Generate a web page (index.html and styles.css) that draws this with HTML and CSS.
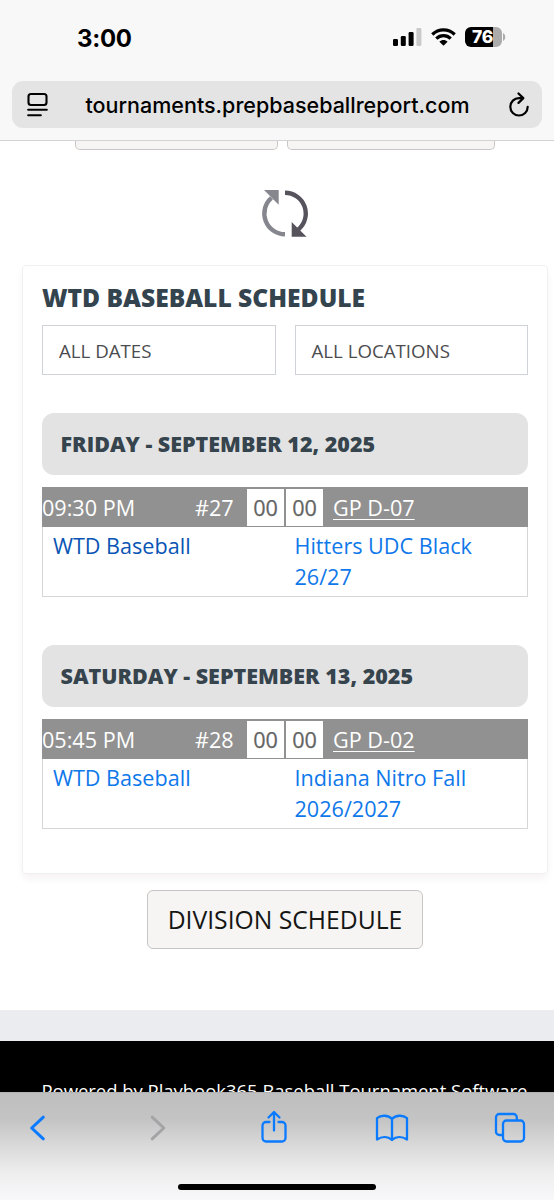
FILE: index.html
```html
<!DOCTYPE html>
<html lang="en">
<head>
<meta charset="utf-8">
<meta name="viewport" content="width=device-width, initial-scale=1">
<title>WTD Baseball Schedule</title>
<link rel="stylesheet" href="styles.css">
</head>
<body>
<div class="screen">
  <header class="browser-top">
    <div class="status">
      <span class="clock">3:00</span>
      <div class="status-icons">
        <svg class="signal" width="29" height="18" viewBox="0 0 29 18"><rect x="0" y="11" width="5" height="7" rx="1.3"/><rect x="7.800" y="8" width="5" height="10" rx="1.3"/><rect x="15.600" y="4" width="5" height="14" rx="1.300"/><rect class="dim" x="23.400" y="0" width="5" height="18" rx="1.300"/></svg>
        <svg class="wifi" width="25" height="18" viewBox="0 0 25 18"><g fill="none" stroke="#000" stroke-width="3.200"><path d="M1.300 6.500C7.500 .3 17.500 .3 23.700 6.500"/><path d="M5.300 10.700c4-4 10.400-4 14.400 0"/></g><path d="M8.400 13.700c2.400-2.200 5.800-2.200 8.200 0L12.500 17.800Z"/></svg>
        <div class="battery"><span class="battery-level">76</span></div>
        <svg class="battery-tip" width="3" height="8" viewBox="0 0 3 8"><path d="M0 0c3 1.500 3 6.500 0 8Z"/></svg>
      </div>
    </div>
    <div class="address">
      <svg class="reader" width="22" height="26" viewBox="0 0 22 26"><g fill="none" stroke="#000" stroke-width="2.100" stroke-linecap="round"><rect x="1.500" y="2" width="18" height="11" rx="2.500"/><path d="M1.200 17.800h18.600M1.200 23.300h12.600"/></g></svg>
      <span class="url">tournaments.prepbaseballreport.com</span>
      <svg class="reload" width="22" height="26" viewBox="0 0 22 26"><g fill="none" stroke="#000" stroke-width="2.200" stroke-linecap="round" stroke-linejoin="round"><path d="M14.500 6.100H11A8.700 8.700 0 1 0 19.700 14.800"/><path d="M10.500 1.500l4.800 4.600-4.800 4.800"/></g></svg>
    </div>
  </header>

  <main class="page">
    <div class="peek-row"><div class="peek peek-left"></div><div class="peek peek-right"></div></div>
    <svg class="refresh" width="48" height="48" viewBox="0 0 48 48"><g fill="none" stroke-width="4.400"><path stroke="#85868e" d="M24 44.300A20.800 20.800 0 0 1 10.500 7.800"/><path stroke="#56535d" d="M24 2.700A20.800 20.800 0 0 1 37.500 39.300"/></g><path fill="#85868e" d="M3 0H17.700V14.800Z"/><path fill="#56535d" d="M30.700 32V46.800H45.500Z"/></svg>

    <section class="card">
      <h1 class="title">WTD BASEBALL SCHEDULE</h1>
      <div class="filters"><div class="filter">ALL DATES</div><div class="filter">ALL LOCATIONS</div></div>

      <h2 class="day friday">FRIDAY - SEPTEMBER 12, 2025</h2>
      <div class="game">
        <div class="game-head"><span class="time">09:30 PM</span><span class="number">#27</span><span class="score">00</span><span class="score">00</span><a class="field">GP D-07</a></div>
        <div class="teams"><a class="team active">WTD Baseball</a><a class="team">Hitters UDC Black<br>26/27</a></div>
      </div>

      <h2 class="day saturday">SATURDAY - SEPTEMBER 13, 2025</h2>
      <div class="game">
        <div class="game-head"><span class="time">05:45 PM</span><span class="number">#28</span><span class="score">00</span><span class="score">00</span><a class="field">GP D-02</a></div>
        <div class="teams"><a class="team">WTD Baseball</a><a class="team">Indiana Nitro Fall<br>2026/2027</a></div>
      </div>
    </section>

    <div class="division">DIVISION SCHEDULE</div>
  </main>

  <div class="band"></div>
  <footer class="powered">Powered by Playbook365 Baseball Tournament Software</footer>

  <nav class="toolbar">
    <div class="tools">
      <svg class="low" width="36" height="28" viewBox="0.500 0 18 28"><path class="line thick" d="M14.800 3.200 3.200 14 14.800 24.800"/></svg>
      <svg class="low" width="36" height="28" viewBox="-2 0 18 28"><path class="line thick off" d="M3.200 3.200 14.800 14 3.200 24.800"/></svg>
      <svg width="36" height="34" viewBox="0 0 28 34"><path class="line" d="M9.500 12H6a3.500 3.500 0 0 0-3.500 3.500V28A3.500 3.500 0 0 0 6 31.500h16a3.500 3.500 0 0 0 3.500-3.500V15.500A3.500 3.500 0 0 0 22 12h-3.500M14 20.500V2.500M8.500 7.500 14 2l5.500 5.500"/></svg>
      <svg class="low" width="36" height="28" viewBox="0 0 34 28"><path class="line" d="M17 5C13 .8 6 .8 2 4.200V25.500C7 22.300 13 22.300 17 26c4-3.700 10-3.700 15-.5V4.200C28 .8 21 .8 17 5V26"/></svg>
      <svg class="tabs" width="36" height="32" viewBox="0 0 32 32"><path class="line" d="M8.500 23H5.300A3.300 3.300 0 0 1 2 19.700V5.300A3.300 3.300 0 0 1 5.300 2H19.500a3.300 3.300 0 0 1 3.300 3.300V8"/><rect class="line" x="9" y="8.500" width="21" height="21" rx="3.500"/></svg>
    </div>
    <div class="home-bar"></div>
  </nav>
</div>
</body>
</html>
```

FILE: styles.css
```css
* { box-sizing: border-box; }
body { margin: 0; background: #fff; font-family: "Open Sans", "Noto Sans", sans-serif; }
.screen { width: 554px; height: 1200px; overflow: hidden; display: flex; flex-direction: column; background: #fff; white-space: nowrap; }

.browser-top { height: 141px; flex: none; background: #f9f8f9; border-bottom: 1px solid #d4d3d4; font-family: Inter, sans-serif; color: #000; }
.status { height: 81px; padding: 0 48px 0 77px; display: flex; justify-content: space-between; }
.clock { padding-top: 23px; font-size: 24px; line-height: 32px; font-weight: 700; letter-spacing: -.3px; }
.status-icons { height: 20px; margin-top: 27px; display: flex; align-items: center; }
.signal .dim { fill: #c9c9ca; }
.wifi { margin-left: 9px; }
.battery { margin-left: 9px; width: 37px; height: 20px; border-radius: 6px; overflow: hidden; background: linear-gradient(to right, #000 28px, #ababac 28px); }
.battery-level { display: block; padding-left: 7px; color: #fff; font-size: 17.500px; line-height: 20px; font-weight: 800; letter-spacing: -.2px; }
.battery-tip { margin-left: 1px; fill: #ababac; }
.address { height: 47px; margin: 0 12px; padding: 0 12px 0 15px; border-radius: 11px; background: #e5e4e4; display: flex; align-items: center; justify-content: space-between; }
.url { margin-right: 2px; font-size: 21.500px; line-height: 30px; font-weight: 500; }

.page { height: 869px; flex: none; display: flex; flex-direction: column; }
.peek-row { height: 9px; flex: none; padding-left: 75px; display: flex; gap: 9px; }
.peek { width: 203px; border: 1px solid #cac6c6; border-top: 0; border-radius: 0 0 5px 5px; background: #f6f5f3; }
.peek-right { width: 208px; }
.refresh { flex: none; margin: 40px 0 27px 261px; }
.card { width: 526px; height: 609px; flex: none; margin-left: 22px; padding: 17px 19px 0; border: 1px solid #f0f0f1; border-radius: 4px; box-shadow: 0 5px 9px -1px rgba(60, 20, 20, .06); }
.title { margin: 0; font-size: 24.600px; line-height: 30px; font-weight: 800; color: #34444f; }
.filters { margin-top: 12px; display: flex; gap: 19px; }
.filter { flex: 1; height: 50px; padding-left: 16px; border: 1px solid #cfd3d8; font-size: 18.700px; line-height: 50px; font-weight: 500; color: #4c4c50; }
.day { height: 62px; margin: 0 0 12px; padding-left: 18.500px; border-radius: 12px; background: #e3e3e3; font-size: 21.500px; line-height: 61px; font-weight: 800; color: #36444d; }
.friday { margin-top: 38px; }
.saturday { margin-top: 48px; }
.game { height: 110px; border: 1px solid #d6d6d6; border-top: 0; }
.game-head { height: 40px; margin: 0 -1px; padding-top: 1px; background: #919191; color: #fff; display: flex; align-items: center; font-size: 21.600px; line-height: 39px; }
.time { width: 153px; }
.number { width: 52px; }
.score { width: 37px; height: 37px; margin-right: 2px; background: #fff; color: #646464; font-weight: 500; line-height: 37px; text-align: center; -webkit-text-stroke: .25px #646464; }
.field { margin-left: 8px; text-decoration: underline; text-decoration-thickness: 1px; text-underline-offset: 3px; }
.teams { display: grid; grid-template-columns: 241.500px 1fr; padding: 3px 0 0 10px; font-size: 21.600px; line-height: 31px; color: #0f78ea; }
.active { color: #0a55b4; }
.division { width: 276px; height: 59px; flex: none; margin: 16px 0 0 147px; border: 1px solid #c8c4c4; border-radius: 6px; background: #f6f5f3; text-align: center; font-size: 24.700px; line-height: 57px; color: #151515; }

.band { height: 31px; flex: none; background: #ebecf0; }
.powered { height: 51px; flex: none; overflow: hidden; padding: 37px 0 0 41.500px; background: #000; color: #fff; font-size: 18.460px; line-height: 26px; }
.toolbar { height: 108px; flex: none; border-top: 1px solid #b2b2b2; background: linear-gradient(#bebebe 0, #c4c4c5 25%, #dadadb 50%, #eeeeef 75%, #f8f8fa 100%); }
.tools { height: 91px; padding: 17px 26px 0 20px; display: flex; align-items: flex-start; justify-content: space-between; }
.low { margin-top: 4px; }
.tabs { margin-top: 2px; }
.line { fill: none; stroke: #0a7aff; stroke-width: 2.300px; stroke-linecap: round; stroke-linejoin: round; }
.thick { stroke-width: 3px; }
.off { stroke: #a4a4a6; }
.home-bar { width: 198px; height: 6px; margin: 0 auto; border-radius: 3px; background: #000; }
```
